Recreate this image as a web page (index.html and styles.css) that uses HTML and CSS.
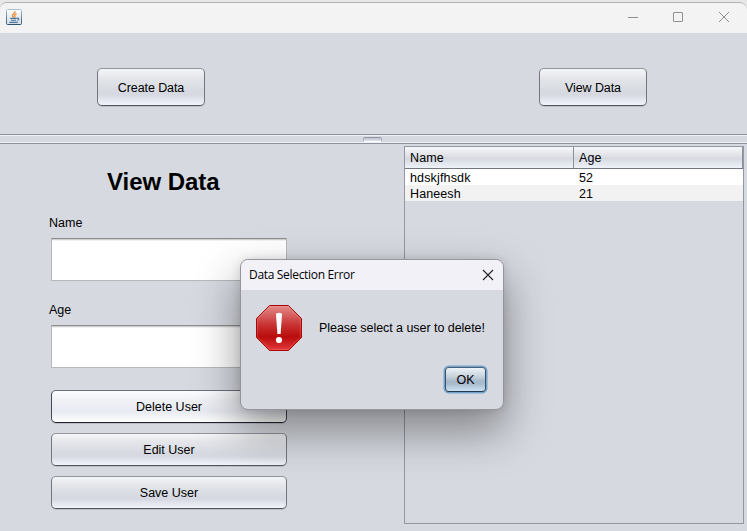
FILE: index.html
```html
<!DOCTYPE html>
<html lang="en">
<head>
<meta charset="utf-8">
<title>View Data</title>
<link rel="stylesheet" href="styles.css">
</head>
<body>
<div class="window">
  <header class="titlebar">
    <svg class="java" width="16" height="16" viewBox="0 0 16 16">
      <defs><linearGradient id="jb" x2="0" y2="1"><stop stop-color="#a9bfd2"/><stop offset="1" stop-color="#2f5472"/></linearGradient>
      <linearGradient id="jf" x2="0" y2="1"><stop stop-color="#fdfdfd"/><stop offset="1" stop-color="#d5dce4"/></linearGradient></defs>
      <rect x=".5" y=".5" width="15" height="15" rx="1" fill="url(#jf)" stroke="url(#jb)"/>
      <path d="M9.2 2.3C9.4 4.2 6 4.8 6.4 6.6c.1.7 1 1.1 1.2 1.9M10.6 4.7C8.8 5.4 8.2 6 8.9 7c.4.6.1 1-.3 1.5" fill="none" stroke="#e98324" stroke-width="1.2"/>
      <path d="M4.2 9.4h6.6M5 11.3h5M3.4 13.4h8.4M11 9.2c2.5-.6 2.6 1.6.2 2.2" fill="none" stroke="#47769c" stroke-width="1.1"/>
    </svg>
    <svg class="controls" width="102" height="12" viewBox="0 0 102 12" fill="none" stroke="#8e8e8e">
      <path d="M0 6.5h10M91 1l10 10M101 1L91 11"/><rect x="45.5" y="1.5" width="9" height="9" rx=".5"/>
    </svg>
  </header>
  <nav class="top">
    <button class="btn create">Create Data</button>
    <button class="btn view">View Data</button>
  </nav>
  <div class="divider"><i class="grip"></i></div>
  <main class="content">
    <section class="form">
      <h1>View Data</h1>
      <label class="label" for="name">Name</label>
      <input class="field" id="name">
      <label class="label second" for="age">Age</label>
      <input class="field" id="age">
      <button class="btn wide bright">Delete User</button>
      <button class="btn wide">Edit User</button>
      <button class="btn wide">Save User</button>
    </section>
    <section class="table">
      <div class="row head"><span>Name</span><span>Age</span></div>
      <div class="row"><span class="loose">hdskjfhsdk</span><span>52</span></div>
      <div class="row alt"><span>Haneesh</span><span>21</span></div>
    </section>
  </main>
</div>
<div class="dialog">
  <header class="dialog-title"><span>Data Selection Error</span>
    <svg width="12" height="12" viewBox="0 0 12 12" stroke="#222" stroke-width="1.1"><path d="M1 1l10 10M11 1L1 11"/></svg>
  </header>
  <div class="message">
    <svg width="46" height="46" viewBox="0 0 46 46">
      <defs><linearGradient id="red" x2="0" y2="1"><stop stop-color="#e58c8c"/><stop offset=".45" stop-color="#c72f2f"/><stop offset=".7" stop-color="#b90c0c"/><stop offset="1" stop-color="#e63a3a"/></linearGradient>
      <linearGradient id="edge" x2="0" y2="1"><stop stop-color="#e69292"/><stop offset=".7" stop-color="#c93838"/><stop offset="1" stop-color="#ee5c5c"/></linearGradient></defs>
      <path d="M13.5.5h19l13 13v19l-13 13h-19l-13-13v-19z" fill="url(#red)" stroke="#ad0505"/>
      <path d="M14 1.6h18L44.4 14v18L32 44.4H14L1.6 32V14z" fill="none" stroke="url(#edge)" stroke-width=".8"/>
      <path d="M20 9.6q0-1.8 3-1.8t3 1.8L24.6 29h-3.2z" fill="#fff"/><circle cx="23" cy="35" r="3.1" fill="#fff"/>
    </svg>
    <p>Please select a user to delete!</p>
  </div>
  <button class="btn ok">OK</button>
</div>
</body>
</html>
```
FILE: styles.css
```css
* { box-sizing: border-box; }
body {
  margin: 0;
  width: 747px;
  height: 531px;
  overflow: hidden;
  background: #e7e7e7;
  font: 12.5px/16px "Liberation Sans", Arial, sans-serif;
  color: #000;
  padding-top: 2px;
}
.window {
  height: 529px;
  background: #d6d9e0;
  border-top: 1px solid #b2b2b2;
  border-radius: 7px 8px 0 0;
  overflow: hidden;
}
.titlebar {
  height: 30px;
  background: #f3f3f3;
  display: flex;
  justify-content: space-between;
  align-items: flex-start;
  padding: 6px 17px 0 6px;
}
.controls { margin-top: 2px; }
.top {
  height: 101px;
  display: flex;
  justify-content: space-between;
  padding: 35px 100px 0 97px;
}
.btn {
  display: block;
  margin: 0;
  padding: 0;
  font: inherit;
  color: #000;
  border: 1px solid;
  border-color: #92959c #73767d #53565d;
  border-radius: 5px;
  background: linear-gradient(#f5f6f8, #e4e6ea 25%, #d7dae1 60%, #d6d9e1 72%, #f0f4fb);
  box-shadow: 0 1px 0 rgba(90, 94, 104, .22);
}
.create, .view { width: 108px; height: 38px; letter-spacing: -.1px; padding-top: 1px; }
.divider {
  height: 10px;
  border: solid #8e929d;
  border-width: 1px 0;
  box-shadow: inset 0 1px #edf0f6, inset 0 -1px #edf0f6;
  display: flex;
  justify-content: center;
  padding: 2px 2px 0 0;
}
.grip {
  width: 19px;
  height: 5px;
  border: 1px solid #a5a9b6;
  border-top: 1px solid #9397a4;
  border-bottom: 1px solid #fff;
  border-radius: 2px;
  background: linear-gradient(#bcc0cc, #e3e5eb);
}
.content { display: flex; height: 387px; }
.form { width: 404px; padding: 24px 0 0 51px; }
h1 { font-size: 24px; line-height: 28px; margin: 0 0 19px 56px; letter-spacing: -.05px; }
.label { display: block; margin-left: -2px; }
.field {
  display: block;
  width: 236px;
  height: 43px;
  margin-top: 7px;
  border: 1px solid #b8b8b8;
  border-top-color: #8d8d8d;
  background: #fff;
  box-shadow: inset 0 1px #d0d0d0, inset 0 2px #f2f2f2;
  outline: 0;
}
.second { margin-top: 21px; }
.wide { width: 236px; height: 33px; margin-top: 10px; }
.field + .wide { margin-top: 22px; }
.bright {
  border-color: #6d7079 #44474f #20232b;
  background: linear-gradient(#fdfdfe, #f0f2f6 28%, #e7eaf1 65%, #fff);
}
.table {
  width: 340px;
  height: 378px;
  margin-top: 2px;
  border: 1px solid #9397a1;
}
.row { display: grid; grid-template-columns: 169px 1fr; height: 16px; background: #fff; letter-spacing: .1px; }
.row span { padding-left: 5px; line-height: 18px; height: 16px; }
.row .loose { letter-spacing: .15px; }
.alt { background: #f2f2f2; }
.head {
  height: 22px;
  border-bottom: 1px solid #737780;
  background: linear-gradient(#f6f7f9, #e0e2e7 40%, #d6d9e0 55%, #eef2f9);
}
.head span { line-height: 22px; height: 21px; border-right: 1px solid #8c909a; }
.dialog {
  position: absolute;
  left: 240px;
  top: 259px;
  width: 264px;
  height: 151px;
  border: 1px solid #94969b;
  border-radius: 8px;
  background: #d6d9e0;
  box-shadow: 0 20px 44px 2px rgba(0, 0, 0, .38), 0 0 10px rgba(0, 0, 0, .12);
}
.dialog-title {
  height: 30px;
  display: flex;
  justify-content: space-between;
  align-items: center;
  padding: 0 9px 1px 8px;
  border-radius: 7px 7px 0 0;
  background: #f3f1f8;
  font: 12px/16px "Open Sans", "Noto Sans", sans-serif;
  letter-spacing: -.32px;
}
.message { display: flex; align-items: center; padding: 15px 0 0 15px; gap: 17px; }
.message p { margin: 0; letter-spacing: -.05px; }
.ok {
  width: 41px;
  height: 25px;
  margin: 16px 0 0 204px;
  padding-top: 1px;
  border-color: #46637d #36516a #213b52;
  border-radius: 4px;
  background: linear-gradient(#eef3f7, #c2cfda 40%, #a5b7c8 58%, #aabdce 70%, #cce1f2);
  box-shadow: 0 0 0 1.5px #75a2ca;
}
```
